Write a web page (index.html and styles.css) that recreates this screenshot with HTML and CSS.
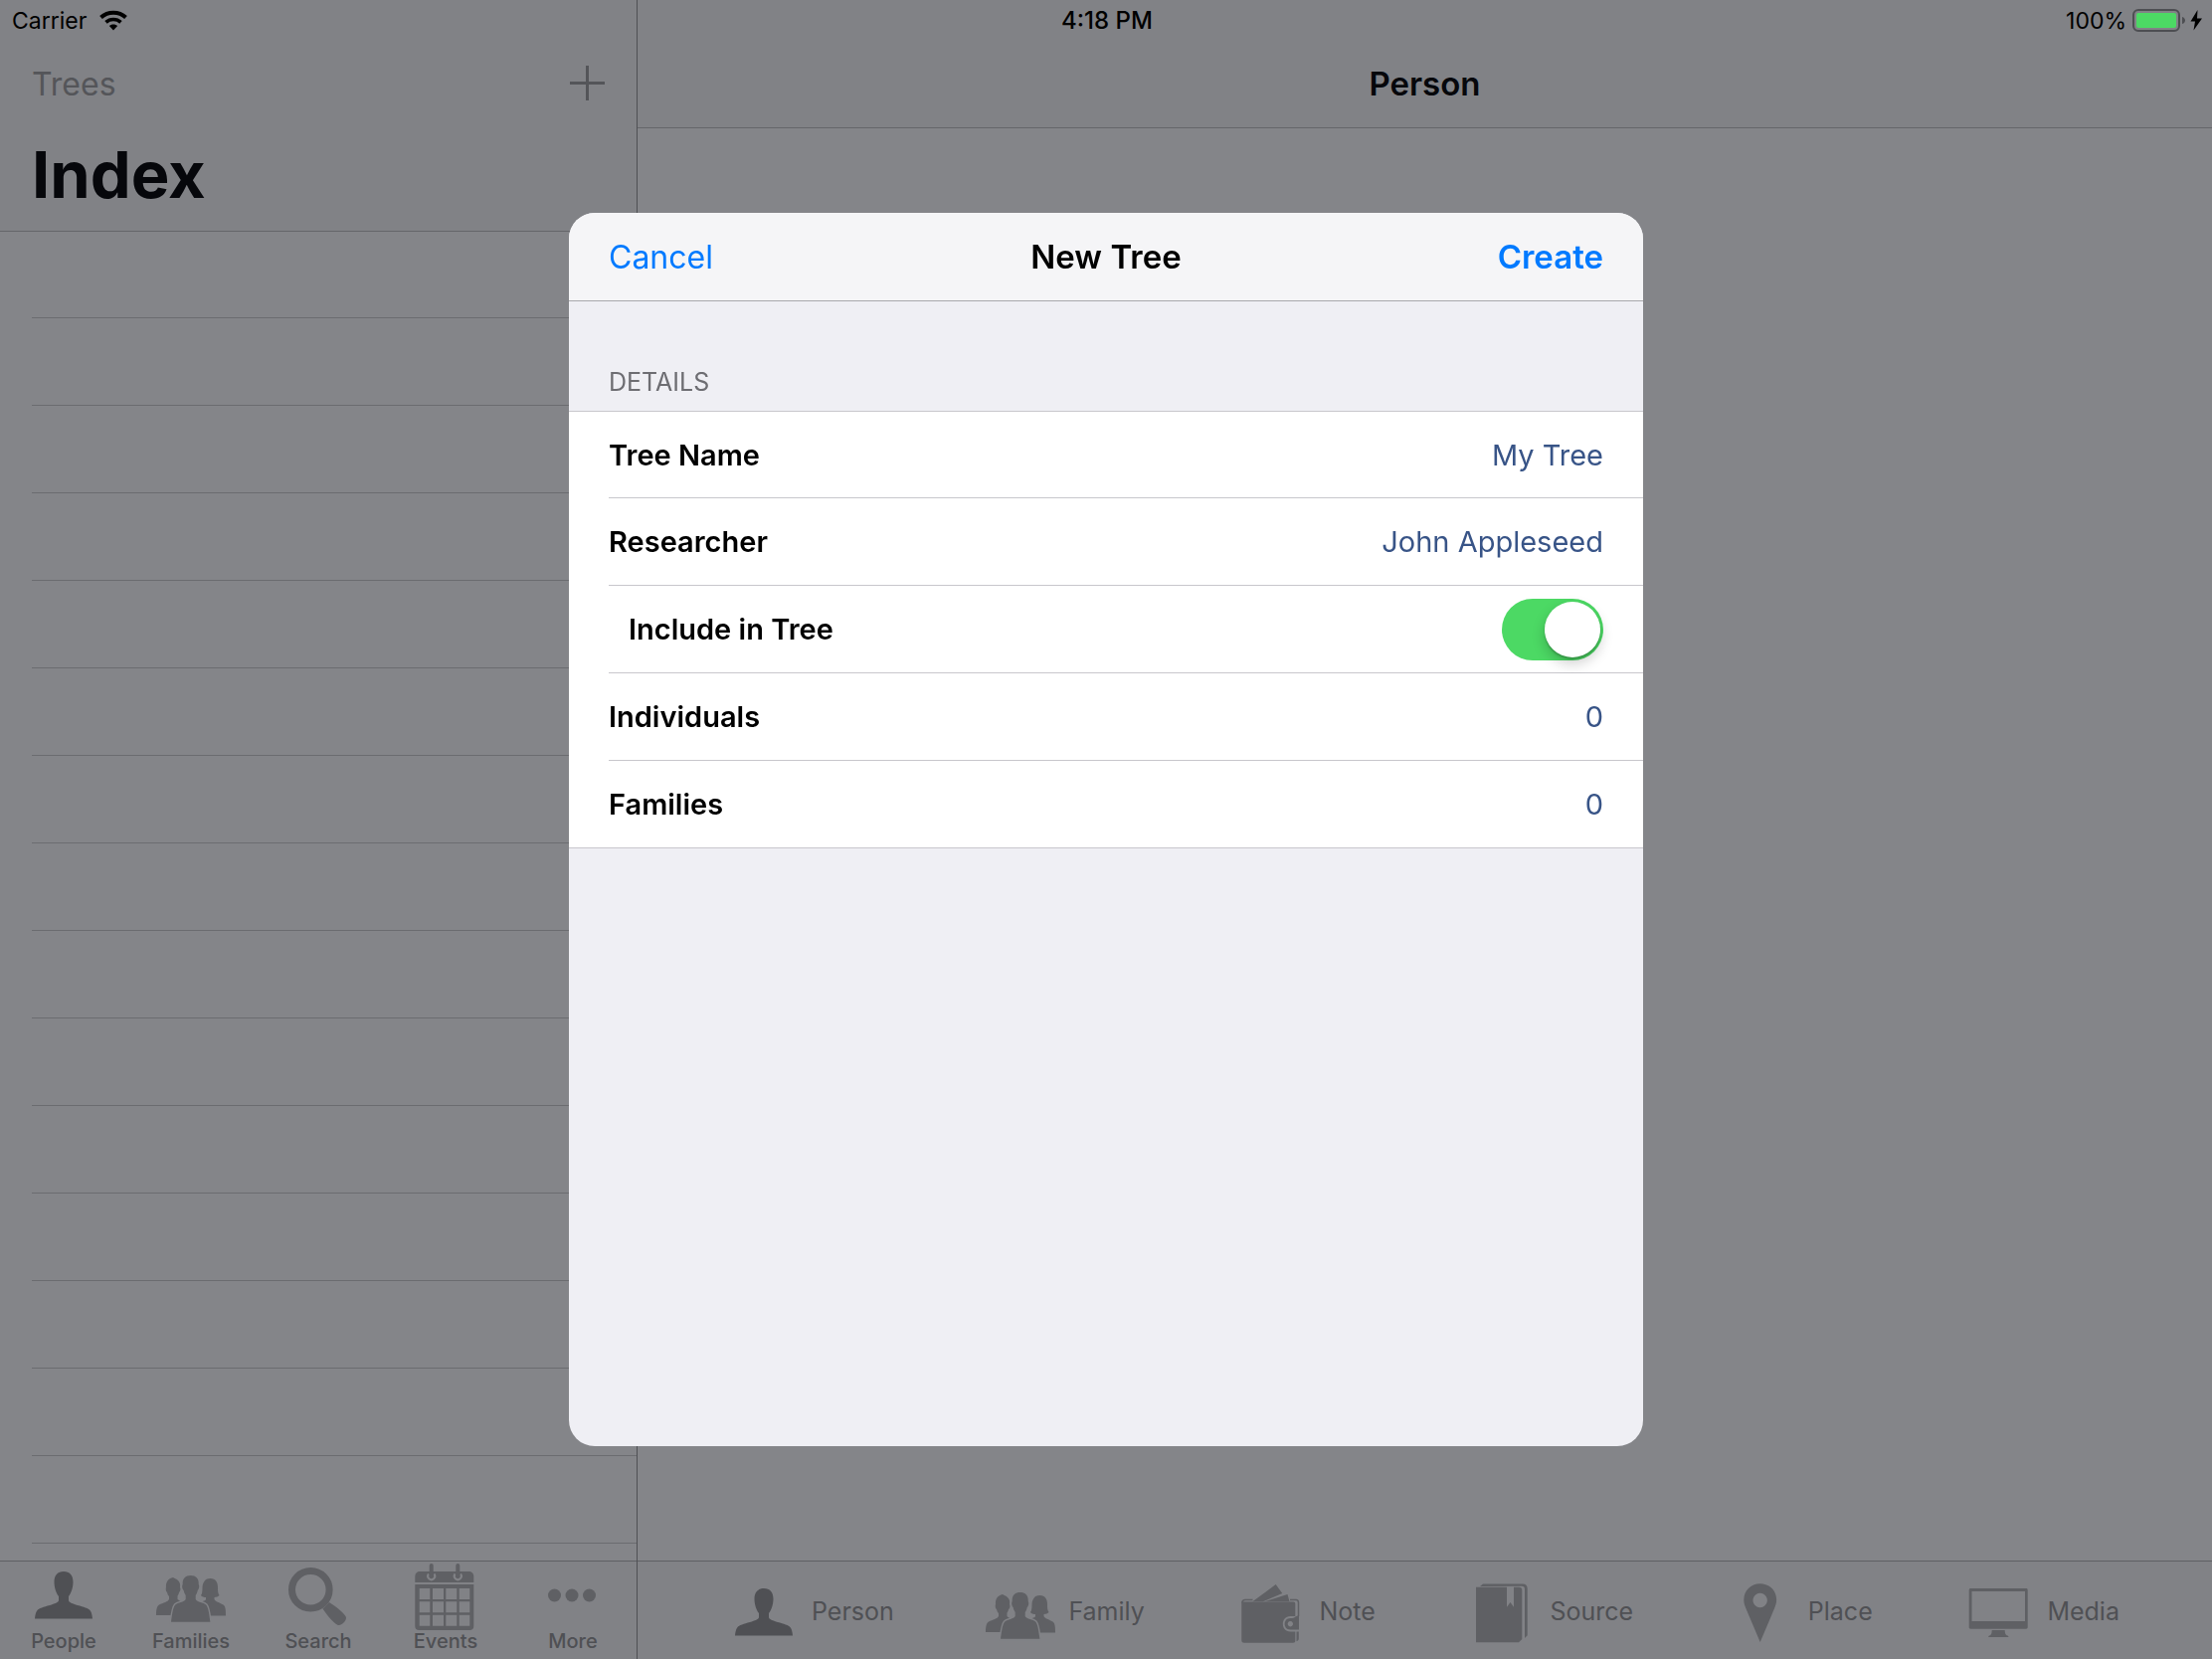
FILE: index.html
```
<!DOCTYPE html>
<html lang="en">
<head>
    <meta charset="UTF-8">
    <meta name="viewport" content="width=device-width, initial-scale=1">
    <title>New Tree</title>
    <link rel="stylesheet" href="styles.css">
</head>
<body>
    <!-- shared icons -->
    <svg class="defs" aria-hidden="true">
        <symbol id="icon-person" viewBox="0 0 60 60">
            <path d="M30 7c-6 0-9.500 4-9.500 10.500 0 5.500 2 11.500 4.500 14.500v4c0 2-4 3.500-9 5-6 1.500-11 3-12.800 5.500-1.400 2-1.800 4.500-2.200 8h58c-.4-3.500-.8-6-2.200-8-1.800-2.500-6.800-4-12.800-5.500-5-1.500-9-3-9-5v-4c2.500-3 4.500-9 4.500-14.500 0-6.500-3.500-10.500-9.500-10.500z"/>
        </symbol>
        <symbol id="icon-family" viewBox="0 0 60 60" overflow="visible">
            <path d="M12 13c1 1 3 1 5 3 2 2 2.500 4 2 7 .8 1 .5 4-1 5-.5 3-1.500 3-1.500 4v3c2 2 6 3 9 4l-8 12H-5c0-5 .5-9 3-10.500 4-2 9-3 10-5.500v-3c-1-1-1.500-2-2-4-1.500-1-1.500-4-1-5-.5-5 2-9 7-10z"/>
            <path d="M49.500 14c-6 0-8 5-8 10 0 3-.5 6-1.500 7 1 1.500 3 2 5 2v2c0 1-2 1.500-4 2.500l8 14H65c0-5 0-9-2.500-11-4-2.500-8-3-9-5.500v-2c2 0 4-1 5-2-1.500-2-1.500-5-1.500-8 0-5-2-9-7.500-9z"/>
            <path class="gap" d="M29.700 11c-5 0-8.500 3-8 9-1 1-.5 5 1 6 .5 3 1.500 4 2 5v4c-1.500 3-8 3-10.500 5.500-2.500 3-3.200 10-4.200 17.200h39.400c-1-7.200-1.700-14.200-4.200-17.200-2.500-2.500-9-2.500-10.500-5.500v-4c.5-1 1.500-2 2-5 1.500-1 2-5 1-6 .5-6-3-9-8-9z"/>
        </symbol>
        <symbol id="icon-search" viewBox="0 0 60 60" overflow="visible">
            <circle class="line" cx="22.300" cy="25.300" r="18.800" stroke-width="7"/>
            <path d="M34.500 44.500l6.500-6.500c7 4.500 14 10 16.500 14 2.500 3.500-5 11-8.500 8.500-4-2.500-10-9-14.500-16z"/>
        </symbol>
        <symbol id="icon-calendar" viewBox="0 0 60 60" overflow="visible">
            <path d="M-.7 18v-6c0-3 2-5 5-5h49c3 0 5 2 5 5v6z"/>
            <path fill-rule="evenodd" d="M-.7 20h59v42c0 2.500-1.500 4-4 4h-51c-2.500 0-4-1.500-4-4zM3.700 24v11h10.600V24zM17 24v11h11V24zM30.300 24v11h11V24zM43.700 24v11h10.600V24zM3.700 37.300v11h10.600v-11zM17 37.300v11h11v-11zM30.300 37.300v11h11v-11zM43.700 37.300v11h10.600v-11zM3.700 50.700v11h10.600v-11zM17 50.700v11h11v-11zM30.300 50.700v11h11v-11zM43.700 50.700v11h10.600v-11z"/>
            <path class="ring" d="M13 9.500a3.500 3.500 0 1 0 5.400 0M39.600 9.500a3.500 3.500 0 1 0 5.400 0"/>
            <path class="line" stroke-width="4" stroke-linecap="round" d="M15.700 1v10M42.300 1v10"/>
        </symbol>
        <symbol id="icon-more" viewBox="0 0 60 60">
            <circle cx="11.500" cy="31" r="6.500"/>
            <circle cx="29" cy="31" r="6.500"/>
            <circle cx="46.500" cy="31" r="6.500"/>
        </symbol>
        <symbol id="icon-note" viewBox="0 0 60 60" overflow="visible">
            <path d="M11.300 20.300L34.700 3l6.500 9-19.500 8.300zM23.500 20.300l23-7.300 2 7.300z"/>
            <path class="line" stroke-width="1.500" d="M11.500 18.500H4c-2 0-3 1-3 3M49 18.500h6c2 0 2.500 1 2.500 3V35"/>
            <path d="M.3 20.500h52c1.500 0 2 .8 2 2V35h-5c-10 0-10 15.500 0 15.500h5v9c0 1.500-.8 2.200-2.200 2.200H3c-2 0-2.700-1-2.700-2.700z"/>
            <path fill-rule="evenodd" d="M49.300 37c2.700 0 4-.5 5-1.500l3.700-1.500v14.500h-8.700c-7.500 0-7.500-11.500 0-11.500zm0 3a2.700 2.700 0 1 0 .1 0zM55.500 50.500h2.300v7c0 1.500-.8 2.200-2.300 2.800z"/>
        </symbol>
        <symbol id="icon-source" viewBox="0 0 60 60" overflow="visible">
            <path d="M4 5.700h31v20l3.500-4.700 3.500 4.700v-20h5c2.300 0 3.300 1 3.300 3.300v49l-3.300 3.300H4z"/>
            <path d="M8 5l3-2.500h40c3 0 4.700 1.700 4.700 4.700v47L53 57V8c0-2.300-1-3.300-3-3.300z"/>
        </symbol>
        <symbol id="icon-place" viewBox="0 0 60 60" overflow="visible">
            <path fill-rule="evenodd" d="M29.700 2.200c-9.400 0-16.400 7-16.400 16.300 0 3 .8 5.500 1.800 8L29.700 61l14.600-34.500c1-2.500 1.800-5 1.800-8 0-9.300-7-16.300-16.400-16.300zm0 9.600a7.200 7.200 0 1 1-.1 0z"/>
        </symbol>
        <symbol id="icon-media" viewBox="0 0 60 60" overflow="visible">
            <path fill-rule="evenodd" d="M1.300 7h55.800c1 0 1.600.6 1.600 1.600v37.500c0 1-.6 1.600-1.600 1.600H1.300c-1 0-1.600-.6-1.600-1.600V8.600C-.3 7.600.3 7 1.300 7zm1.200 3v30H56V10zM22.700 49h13c0 4 1.300 5 3.600 6v1h-20v-1c2.300-1 3.400-2 3.400-6z"/>
        </symbol>
    </svg>

    <div class="status-bar">
        <div class="carrier">
            <span>Carrier</span>
            <svg width="28" height="21" viewBox="0 0 28 21">
                <path d="M14 20.500l-4.200-4.400c2-2.200 6.400-2.200 8.400 0z"/>
                <path d="M6.500 12.400c4.200-3.900 10.800-3.900 15 0" fill="none" stroke="#000" stroke-width="3.600"/>
                <path d="M1.500 7.500c7-6.500 18-6.500 25 0" fill="none" stroke="#000" stroke-width="4"/>
            </svg>
        </div>
        <span class="clock">4:18 PM</span>
        <div class="battery">
            <span>100%</span>
            <svg width="70" height="23" viewBox="0 0 70 23">
                <rect x="1" y="1" width="46" height="21" rx="5" fill="none" stroke="#4d4e52" stroke-width="2"/>
                <rect x="4" y="4" width="40" height="15" rx="2" fill="#4cd964"/>
                <path d="M50 8c4 1 4 6 0 7z" fill="#4d4e52"/>
                <path d="M65.500 1L58.500 12.500h4.500L61.500 21.500 70 9.500h-5z"/>
            </svg>
        </div>
    </div>

    <div class="split">
        <aside class="sidebar">
            <header class="sidebar-head">
                <div class="sidebar-nav">
                    <a href="#">Trees</a>
                    <button type="button" class="add" aria-label="Add"></button>
                </div>
                <h1>Index</h1>
            </header>
            <ul class="rows">
                <li></li><li></li><li></li><li></li>
                <li></li><li></li><li></li><li></li>
                <li></li><li></li><li></li><li></li>
                <li></li><li></li><li></li>
            </ul>
            <nav class="tabs">
                <a href="#" class="selected"><svg><use href="#icon-person"/></svg>People</a>
                <a href="#"><svg><use href="#icon-family"/></svg>Families</a>
                <a href="#"><svg><use href="#icon-search"/></svg>Search</a>
                <a href="#"><svg><use href="#icon-calendar"/></svg>Events</a>
                <a href="#"><svg><use href="#icon-more"/></svg>More</a>
            </nav>
        </aside>
        <main class="detail">
            <header class="detail-head">
                <h2>Person</h2>
            </header>
            <div class="detail-body"></div>
            <nav class="toolbar">
                <a href="#" class="selected"><svg><use href="#icon-person"/></svg>Person</a>
                <a href="#"><svg><use href="#icon-family"/></svg>Family</a>
                <a href="#"><svg><use href="#icon-note"/></svg>Note</a>
                <a href="#"><svg><use href="#icon-source"/></svg>Source</a>
                <a href="#"><svg><use href="#icon-place"/></svg>Place</a>
                <a href="#"><svg><use href="#icon-media"/></svg>Media</a>
            </nav>
        </main>
    </div>

    <div class="overlay">
        <form class="dialog" role="dialog" aria-labelledby="dialog-title">
            <header class="dialog-head">
                <button type="button">Cancel</button>
                <h2 id="dialog-title">New Tree</h2>
                <button type="button" class="create">Create</button>
            </header>
            <h3>DETAILS</h3>
            <div class="group">
                <div class="field">
                    <label for="tree-name">Tree Name</label>
                    <input type="text" id="tree-name" value="My Tree">
                </div>
                <div class="field">
                    <label for="researcher">Researcher</label>
                    <input type="text" id="researcher" value="John Appleseed">
                </div>
                <div class="field">
                    <label for="include" class="indent">Include in Tree</label>
                    <input type="checkbox" id="include" class="switch" checked>
                </div>
                <div class="field">
                    <label for="individuals">Individuals</label>
                    <output id="individuals">0</output>
                </div>
                <div class="field">
                    <label for="families">Families</label>
                    <output id="families">0</output>
                </div>
            </div>
        </form>
    </div>
</body>
</html>
```
FILE: styles.css
```
*{
    margin: 0;
    padding: 0;
    box-sizing: border-box;
}
body{
    font-family: Inter, "Liberation Sans", sans-serif;
    background: #848589;
    color: #000;
}
ul{
    list-style: none;
}
a{
    color: inherit;
    text-decoration: none;
}
button, input{
    font: inherit;
    color: inherit;
    border: 0;
    background: none;
}
.defs{
    position: absolute;
    width: 0;
    height: 0;
}
.gap{
    stroke: #818286;
    stroke-width: 3;
    paint-order: stroke;
}
.line{
    fill: none;
    stroke: #5f6064;
}
.ring{
    fill: none;
    stroke: #818286;
    stroke-width: 2;
}

/* status bar */
.status-bar{
    position: absolute;
    top: 0;
    left: 0;
    right: 0;
    height: 41px;
    padding: 0 10px 0 12px;
    display: grid;
    grid-template-columns: 1fr auto 1fr;
    align-items: center;
    font-size: 23px;
}
.carrier, .battery{
    display: flex;
    align-items: center;
    gap: 13px;
}
.battery{
    justify-content: flex-end;
    gap: 6px;
}
.clock{
    font-size: 24px;
    font-weight: 500;
}

/* two panes */
.split{
    display: flex;
    height: 100vh;
}
.sidebar{
    flex: 0 0 641px;
    display: flex;
    flex-direction: column;
    border-right: 1px solid #4f5054;
}
.sidebar-head{
    height: 233px;
    padding: 40px 32px 0;
    background: #818286;
    border-bottom: 1px solid #65666a;
}
.sidebar-nav{
    height: 88px;
    display: flex;
    align-items: center;
    justify-content: space-between;
    font-size: 32px;
    color: #545559;
}
.add{
    width: 35px;
    height: 37px;
    background:
        linear-gradient(#545559, #545559) 0 16px / 35px 3px no-repeat,
        linear-gradient(#545559, #545559) 16px 0 / 3px 35px no-repeat;
}
h1{
    font-size: 65px;
    line-height: 96px;
    font-weight: 700;
    color: #06070b;
}
.rows{
    flex: 1;
    min-height: 0;
    overflow: hidden;
    margin-top: -1px;
    padding-left: 32px;
}
.rows li{
    height: 88px;
    border-bottom: 1px solid #6b6c70;
}
.tabs, .toolbar{
    height: 99px;
    display: flex;
    background: #818286;
    border-top: 1px solid #5f6064;
    color: #4f5054;
    fill: #5f6064;
}
.tabs svg, .toolbar svg{
    width: 60px;
    height: 60px;
    overflow: visible;
}
.selected{
    fill: #4f5054;
}
.tabs a{
    flex: 1;
    padding-top: 3px;
    display: flex;
    flex-direction: column;
    align-items: center;
    font-size: 20px;
    line-height: 35px;
    font-weight: 500;
}
.detail{
    flex: 1;
    display: flex;
    flex-direction: column;
}
.detail-head{
    height: 129px;
    padding-top: 40px;
    background: #818286;
    border-bottom: 1px solid #65666a;
    text-align: center;
}
h2{
    font-size: 33px;
    line-height: 88px;
    font-weight: 600;
}
.detail-head h2{
    color: #06070b;
}
.detail-body{
    flex: 1;
}
.toolbar{
    justify-content: space-between;
    padding: 1px 93px 0 97px;
}
.toolbar a{
    display: flex;
    align-items: center;
    gap: 18px;
    font-size: 25px;
}

/* dialog */
.overlay{
    position: fixed;
    top: 0;
    right: 0;
    bottom: 0;
    left: 0;
    display: flex;
    align-items: center;
    justify-content: center;
}
.dialog{
    width: 1080px;
    height: 1240px;
    max-width: 94%;
    max-height: 94%;
    overflow: hidden;
    border-radius: 26px;
    background: #efeff4;
}
.dialog-head{
    height: 89px;
    padding: 0 40px;
    display: grid;
    grid-template-columns: 1fr auto 1fr;
    align-items: center;
    background: #f5f5f7;
    border-bottom: 1px solid #a8a8ac;
}
.dialog-head button{
    justify-self: start;
    font-size: 32px;
    color: #007aff;
}
.dialog-head .create{
    justify-self: end;
    font-size: 33px;
    font-weight: 600;
}
h3{
    padding: 64px 40px 12px;
    font-size: 25px;
    line-height: 34px;
    font-weight: 400;
    color: #6d6d72;
}
.group{
    background: #fff;
    border: solid #c8c7cc;
    border-width: 1px 0;
}
.field{
    height: 88px;
    margin-left: 40px;
    padding-right: 40px;
    display: flex;
    align-items: center;
    justify-content: space-between;
    border-bottom: 1px solid #c8c7cc;
    font-size: 29px;
    color: #385487;
}
.field:first-child{
    height: 87px;
}
.field:last-child{
    height: 87px;
    border-bottom: 0;
}
.field label{
    font-weight: 600;
    color: #000;
}
.field .indent{
    padding-left: 20px;
}
.field input[type="text"]{
    flex: 1;
    min-width: 0;
    text-align: right;
}
.switch{
    appearance: none;
    width: 102px;
    height: 62px;
    padding: 3px;
    border-radius: 31px;
    background: #e5e5ea;
}
.switch::before{
    content: "";
    display: block;
    width: 56px;
    height: 56px;
    border-radius: 50%;
    background: #fff;
    box-shadow: 0 6px 14px rgba(0, 0, 0, .2), 0 2px 2px rgba(0, 0, 0, .2);
}
.switch:checked{
    background: #4cd964;
}
.switch:checked::before{
    margin-left: 40px;
}
```
